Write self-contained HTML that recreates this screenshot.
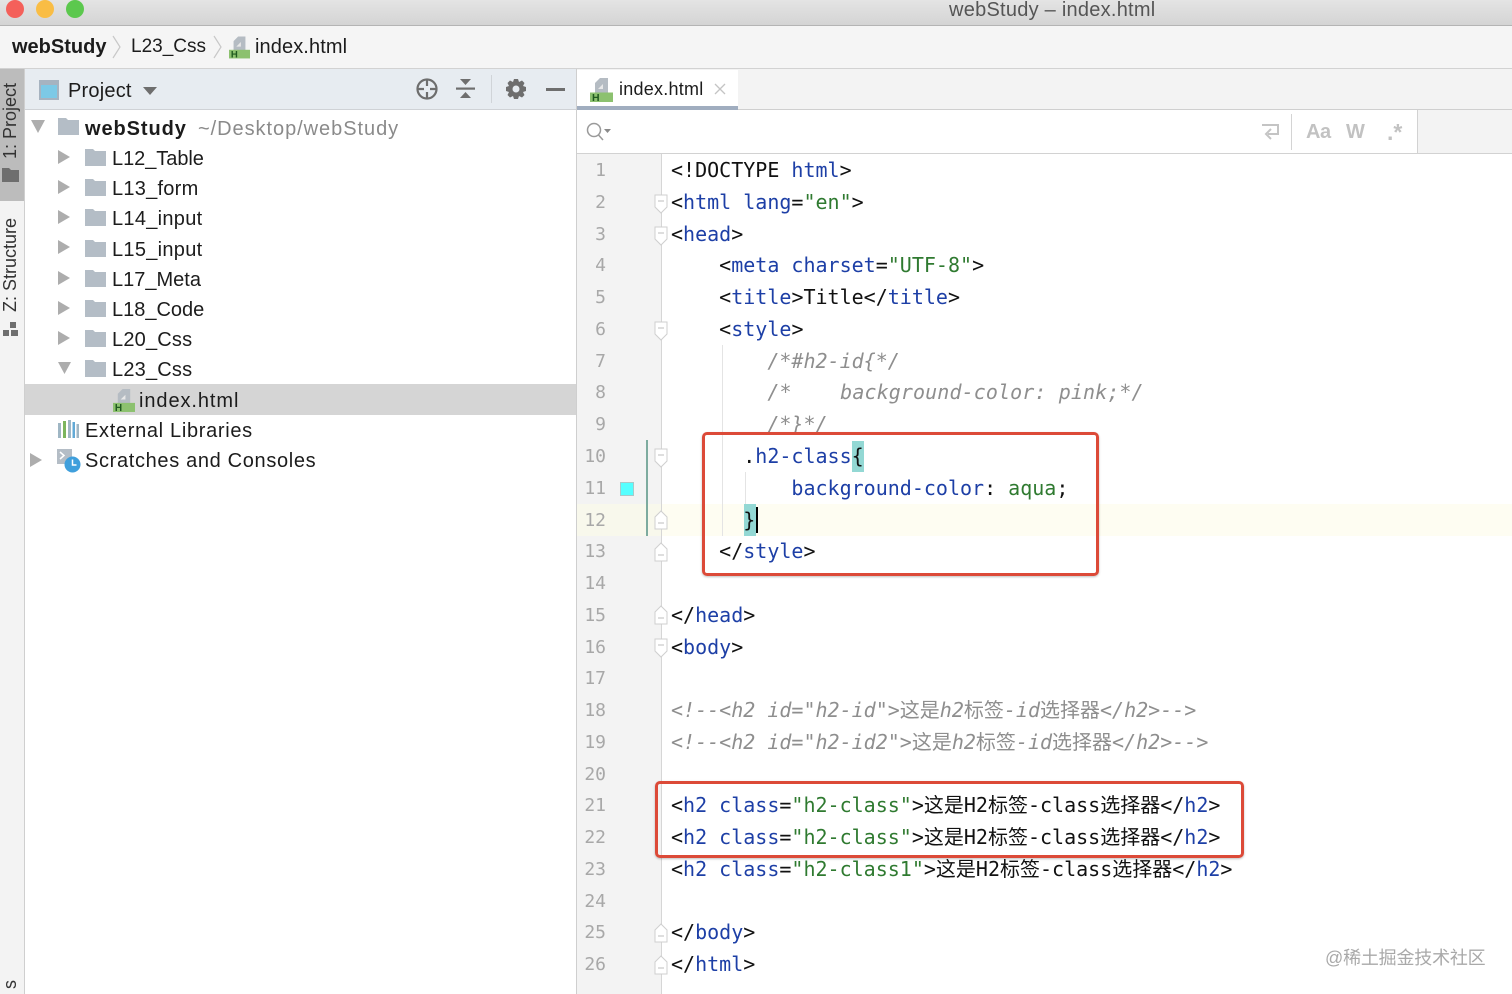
<!DOCTYPE html>
<html lang="zh"><head><meta charset="utf-8"><title>webStudy – index.html</title>
<style>
*{box-sizing:border-box}
html,body{margin:0;padding:0;width:1512px;height:994px;overflow:hidden;background:#fff}
body{position:relative;font-family:"Liberation Sans","Noto Sans CJK SC",sans-serif;color:#1c1c1c}
.a{position:absolute}
.t{position:absolute;white-space:nowrap;font-size:20px;line-height:30px;letter-spacing:.62px}
svg{position:absolute;overflow:visible}
pre{margin:0;position:absolute;font-family:"DejaVu Sans Mono","Noto Sans CJK SC",monospace;font-size:20px;line-height:31.76px}
.b{color:#1d3fa6}.g{color:#2f7a30}.c{color:#8e8e8e;font-style:italic}
.c i{font-style:normal}
.v{position:absolute;writing-mode:vertical-rl;transform:rotate(180deg);font-size:18px;line-height:20px;white-space:nowrap;color:#333}
</style></head><body>
<svg width="0" height="0" style="position:absolute">
<defs>
<symbol id="f" viewBox="0 0 21 17"><path d="M0 0H8L10 2H21V17H0Z" fill="#b4bdc6"/></symbol>
<symbol id="h" viewBox="0 0 23 24"><path d="M10 0H18V15H5V5Z" fill="#b5bcc3"/><path d="M8 11L13 6V11Z" fill="#e8e8e8"/><rect x="0" y="14.500" width="23" height="9.500" fill="#8cc16f"/><text x="2" y="23" font-family="Liberation Sans" font-size="10.5" font-weight="bold" fill="#1f5a1f">H</text></symbol>
<symbol id="r" viewBox="0 0 12 14"><path d="M0 0L12 7L0 14Z" fill="#adadad"/></symbol>
<symbol id="fo" viewBox="0 0 14 20"><path d="M1 1H13V13L7 19L1 13Z" fill="#fff" stroke="#cfcfcf"/><path d="M4 7H10" stroke="#bdbdbd"/></symbol>
<symbol id="fc" viewBox="0 0 14 20"><path d="M1 19H13V7L7 1L1 7Z" fill="#fff" stroke="#cfcfcf"/><path d="M4 13H10" stroke="#bdbdbd"/></symbol>
</defs></svg>

<!-- title bar -->
<div class="a" style="left:0;top:0;width:1512px;height:26px;background:linear-gradient(#e4e4e4,#d4d4d4);border-bottom:1px solid #b4b4b4"></div>
<div class="a" style="left:6px;top:0;width:18px;height:18px;border-radius:50%;background:#f4605a"></div>
<div class="a" style="left:36px;top:0;width:18px;height:18px;border-radius:50%;background:#f9bd45"></div>
<div class="a" style="left:66px;top:0;width:18px;height:18px;border-radius:50%;background:#5cc84e"></div>
<div class="t" style="left:949px;top:-5px;color:#555;letter-spacing:.25px">webStudy – index.html</div>

<!-- breadcrumb -->
<div class="a" style="left:0;top:26px;width:1512px;height:43px;background:#f5f5f5;border-bottom:1px solid #d2d2d2"></div>
<div class="t" style="left:12px;top:32px;font-weight:bold;letter-spacing:0">webStudy</div>
<svg style="left:112px;top:36px" width="10" height="24"><path d="M1 0L8 11L1 22" fill="none" stroke="#c8c8c8" stroke-width="1.2"/></svg>
<div class="t" style="left:131px;top:32px;font-size:19px;letter-spacing:0">L23_Css</div>
<svg style="left:213px;top:36px" width="10" height="24"><path d="M1 0L8 11L1 22" fill="none" stroke="#c8c8c8" stroke-width="1.2"/></svg>
<svg style="left:229px;top:36px" width="21" height="23"><use href="#h" width="21" height="23"/></svg>
<div class="t" style="left:255px;top:32px;letter-spacing:.1px">index.html</div>

<!-- left strip -->
<div class="a" style="left:0;top:69px;width:25px;height:925px;background:#f3f3f3;border-right:1px solid #cfcfcf"></div>
<div class="a" style="left:0;top:69px;width:24px;height:132px;background:#bcbcbc"></div>
<div class="v" style="left:0;top:83px">1: Project</div>
<svg style="left:2px;top:168px" width="17" height="14"><path d="M0 0H7L9 2H17V14H0Z" fill="#6e6e6e"/></svg>
<div class="v" style="left:0;top:218px">Z: Structure</div>
<svg style="left:3px;top:322px" width="15" height="15" fill="#6e6e6e"><rect x="7" y="0" width="6" height="6"/><rect x="0" y="8" width="6" height="6"/><rect x="8" y="8" width="7" height="6"/></svg>
<div class="v" style="left:0;top:980px">s</div>

<!-- project header -->
<div class="a" style="left:25px;top:69px;width:551px;height:41px;background:#e7ecf1;border-bottom:1px solid #cfd2d6"></div>
<svg style="left:39px;top:80px" width="20" height="20"><rect width="20" height="20" fill="#a6b3c0"/><rect x="2" y="5" width="16" height="13" fill="#7cc9e6"/></svg>
<div class="t" style="left:68px;top:76px;letter-spacing:.2px">Project</div>
<svg style="left:143px;top:87px" width="14" height="9"><path d="M0 0H14L7 8Z" fill="#6e6e6e"/></svg>
<svg style="left:415px;top:77px" width="24" height="24" fill="none" stroke="#6e6e6e" stroke-width="2.2"><circle cx="12" cy="12" r="9.5"/><path d="M12 2V9M12 15V22M2 12H9M15 12H22"/></svg>
<svg style="left:456px;top:79px" width="20" height="20" fill="#6e6e6e"><path d="M4 0H15L9.500 6Z"/><rect x="0" y="8.500" width="19" height="2.200"/><path d="M4 19H15L9.500 13Z"/></svg>
<div class="a" style="left:491px;top:75px;width:1px;height:28px;background:#d0d4d8"></div>
<svg style="left:505px;top:78px" width="22" height="22"><path d="M9 1H13L14 4L17 2.500L19.500 5L18 8L21 9V13L18 14L19.500 17L17 19.500L14 18L13 21H9L8 18L5 19.500L2.500 17L4 14L1 13V9L4 8L2.500 5L5 2.500L8 4Z" fill="#6e6e6e"/><circle cx="11" cy="11" r="3.500" fill="#e7ecf1"/></svg>
<div class="a" style="left:546px;top:88px;width:19px;height:3px;background:#6e6e6e"></div>

<!-- tree -->
<div class="a" style="left:25px;top:384px;width:551px;height:31px;background:#d5d5d5"></div>
<svg style="left:31px;top:120px" width="14" height="13"><path d="M0 0H14L7 13Z" fill="#adadad"/></svg>
<svg style="left:58px;top:118px" width="21" height="17"><use href="#f" width="21" height="17"/></svg>
<div class="t" style="left:85px;top:114px;font-weight:bold;letter-spacing:.92px">webStudy</div>
<div class="t" style="left:198px;top:114px;color:#8a8a8a;letter-spacing:.95px">~/Desktop/webStudy</div>

<svg style="left:58px;top:150px" width="12" height="14"><use href="#r" width="12" height="14"/></svg><svg style="left:85px;top:149px" width="21" height="17"><use href="#f" width="21" height="17"/></svg><div class="t" style="left:112px;top:144px;letter-spacing:-.05px">L12_Table</div>
<svg style="left:58px;top:180px" width="12" height="14"><use href="#r" width="12" height="14"/></svg><svg style="left:85px;top:179px" width="21" height="17"><use href="#f" width="21" height="17"/></svg><div class="t" style="left:112px;top:174px;letter-spacing:.25px">L13_form</div>
<svg style="left:58px;top:210px" width="12" height="14"><use href="#r" width="12" height="14"/></svg><svg style="left:85px;top:209px" width="21" height="17"><use href="#f" width="21" height="17"/></svg><div class="t" style="left:112px;top:204px;letter-spacing:.29px">L14_input</div>
<svg style="left:58px;top:240px" width="12" height="14"><use href="#r" width="12" height="14"/></svg><svg style="left:85px;top:240px" width="21" height="17"><use href="#f" width="21" height="17"/></svg><div class="t" style="left:112px;top:235px;letter-spacing:.29px">L15_input</div>
<svg style="left:58px;top:271px" width="12" height="14"><use href="#r" width="12" height="14"/></svg><svg style="left:85px;top:270px" width="21" height="17"><use href="#f" width="21" height="17"/></svg><div class="t" style="left:112px;top:265px;letter-spacing:0">L17_Meta</div>
<svg style="left:58px;top:301px" width="12" height="14"><use href="#r" width="12" height="14"/></svg><svg style="left:85px;top:300px" width="21" height="17"><use href="#f" width="21" height="17"/></svg><div class="t" style="left:112px;top:295px;letter-spacing:0">L18_Code</div>
<svg style="left:58px;top:331px" width="12" height="14"><use href="#r" width="12" height="14"/></svg><svg style="left:85px;top:330px" width="21" height="17"><use href="#f" width="21" height="17"/></svg><div class="t" style="left:112px;top:325px;letter-spacing:.2px">L20_Css</div>
<svg style="left:58px;top:362px" width="14" height="12"><path d="M0 0H13L6.500 12Z" fill="#adadad"/></svg><svg style="left:85px;top:360px" width="21" height="17"><use href="#f" width="21" height="17"/></svg><div class="t" style="left:112px;top:355px;letter-spacing:.2px">L23_Css</div>
<svg style="left:113px;top:389px" width="22" height="23"><use href="#h" width="22" height="23"/></svg><div class="t" style="left:139px;top:386px;letter-spacing:.92px">index.html</div>
<svg style="left:57px;top:420px" width="22" height="18"><rect x="1" y="3" width="3" height="15" fill="#9fb6c4"/><rect x="6" y="1" width="3" height="17" fill="#7cb55e"/><rect x="11" y="0" width="3" height="18" fill="#9fb6c4"/><rect x="15.500" y="2" width="2.500" height="16" fill="#62a9d6"/><rect x="19.500" y="4" width="2.500" height="14" fill="#9fb6c4"/></svg>
<div class="t" style="left:85px;top:416px;letter-spacing:.68px">External Libraries</div>
<svg style="left:30px;top:453px" width="12" height="14"><use href="#r" width="12" height="14"/></svg>
<svg style="left:57px;top:449px" width="24" height="24"><rect width="15" height="15" fill="#b4bdc6"/><path d="M3 3L7 6.500L3 10" fill="none" stroke="#fff" stroke-width="1.500"/><circle cx="15.500" cy="15.500" r="8" fill="#3f9fdc"/><path d="M15.500 10.500V16H19.500" fill="none" stroke="#fff" stroke-width="1.500"/></svg>
<div class="t" style="left:85px;top:446px;letter-spacing:.66px">Scratches and Consoles</div>

<div class="a" style="left:576px;top:69px;width:1px;height:925px;background:#cfcfcf"></div>

<!-- tabs -->
<div class="a" style="left:577px;top:69px;width:935px;height:41px;background:#f3f3f3;border-bottom:1px solid #cfcfcf"></div>
<div class="a" style="left:577px;top:70px;width:161px;height:36px;background:#fff"></div>
<div class="a" style="left:577px;top:106px;width:161px;height:4px;background:#a0adbf"></div>
<svg style="left:590px;top:78px" width="23" height="24"><use href="#h" width="23" height="24"/></svg>
<div class="t" style="left:619px;top:74px;font-size:18px;letter-spacing:.25px">index.html</div>
<svg style="left:714px;top:83px" width="12" height="12"><path d="M1 1L11 11M11 1L1 11" stroke="#c4c4c4" stroke-width="1.300"/></svg>

<!-- search bar -->
<div class="a" style="left:577px;top:110px;width:935px;height:44px;background:#f3f3f3;border-bottom:1px solid #d2d2d2"></div>
<div class="a" style="left:577px;top:110px;width:841px;height:43px;background:#fff;border-right:1px solid #d2d2d2"></div>
<svg style="left:586px;top:122px" width="26" height="20" fill="none" stroke="#9a9a9a" stroke-width="1.500"><circle cx="8" cy="8" r="6.500"/><path d="M12.500 13L17 18"/><path d="M18 7H25L21.500 11Z" fill="#8a8a8a" stroke="none"/></svg>
<svg style="left:1261px;top:123px" width="20" height="19" fill="none" stroke="#c4c4c4" stroke-width="2"><path d="M1 2H17V11H7"/><path d="M10 6L5 11L10 16" /></svg>
<div class="a" style="left:1291px;top:114px;width:1px;height:36px;background:#d4d4d4"></div>
<div class="t" style="left:1306px;top:117px;color:#c2c2c2;font-weight:bold;letter-spacing:-.4px">Aa</div>
<div class="t" style="left:1346px;top:117px;color:#c2c2c2;font-weight:bold;letter-spacing:0">W</div>
<div class="t" style="left:1387px;top:117px;color:#c2c2c2;font-weight:bold;letter-spacing:0;font-size:23px">.*</div>

<!-- gutter -->
<div class="a" style="left:577px;top:154px;width:84px;height:840px;background:#f3f3f3"></div>
<div class="a" style="left:661px;top:154px;width:1px;height:840px;background:#d6d6d6"></div>
<div class="a" style="left:577px;top:504px;width:84px;height:32px;background:#f8f8ec"></div>
<div class="a" style="left:662px;top:504px;width:850px;height:32px;background:#fefdf2"></div>
<div class="a" style="left:646px;top:440px;width:2px;height:96px;background:#7dab9f"></div>
<div class="a" style="left:620px;top:482px;width:14px;height:14px;background:#5ff;border:1px solid #a9c9c9"></div>
<pre style="left:577px;top:155.100px;width:29px;text-align:right;font-size:18px;color:#a8a8a8">1
2
3
4
5
6
7
8
9
10
11
12
13
14
15
16
17
18
19
20
21
22
23
24
25
26</pre>

<svg style="left:654px;top:194px" width="14" height="20"><use href="#fo" width="14" height="20"/></svg>
<svg style="left:654px;top:226px" width="14" height="20"><use href="#fo" width="14" height="20"/></svg>
<svg style="left:654px;top:321px" width="14" height="20"><use href="#fo" width="14" height="20"/></svg>
<svg style="left:654px;top:448px" width="14" height="20"><use href="#fo" width="14" height="20"/></svg>
<svg style="left:654px;top:510px" width="14" height="20"><use href="#fc" width="14" height="20"/></svg>
<svg style="left:654px;top:542px" width="14" height="20"><use href="#fc" width="14" height="20"/></svg>
<svg style="left:654px;top:605px" width="14" height="20"><use href="#fc" width="14" height="20"/></svg>
<svg style="left:654px;top:638px" width="14" height="20"><use href="#fo" width="14" height="20"/></svg>
<svg style="left:654px;top:923px" width="14" height="20"><use href="#fc" width="14" height="20"/></svg>
<svg style="left:654px;top:955px" width="14" height="20"><use href="#fc" width="14" height="20"/></svg>

<!-- editor decorations -->
<div class="a" style="left:722px;top:345px;width:1px;height:191px;background:#e4e4e4"></div>
<div class="a" style="left:745px;top:472px;width:1px;height:32px;background:#e4e4e4"></div>
<div class="a" style="left:852px;top:441px;width:12px;height:31px;background:#93d8d4"></div>
<div class="a" style="left:744px;top:504px;width:12px;height:32px;background:#93d8d4"></div>

<pre style="left:671px;top:155.100px;color:#111">&lt;!DOCTYPE <span class="b">html</span>&gt;
&lt;<span class="b">html lang</span>=<span class="g">"en"</span>&gt;
&lt;<span class="b">head</span>&gt;
    &lt;<span class="b">meta charset</span>=<span class="g">"UTF-8"</span>&gt;
    &lt;<span class="b">title</span>&gt;Title&lt;/<span class="b">title</span>&gt;
    &lt;<span class="b">style</span>&gt;
        <span class="c">/*#h2-id{*/</span>
        <span class="c" style="letter-spacing:.1px">/*    background-color: pink;*/</span>
        <span class="c">/*}*/</span>
      .<span class="b">h2-class</span>{
          <span class="b">background-color</span>: <span class="g">aqua</span>;
      }
    &lt;/<span class="b">style</span>&gt;

&lt;/<span class="b">head</span>&gt;
&lt;<span class="b">body</span>&gt;

<span class="c">&lt;!--&lt;h2 id="h2-id"&gt;<i>这是</i>h2<i>标签</i>-id<i>选择器</i>&lt;/h2&gt;--&gt;</span>
<span class="c">&lt;!--&lt;h2 id="h2-id2"&gt;<i>这是</i>h2<i>标签</i>-id<i>选择器</i>&lt;/h2&gt;--&gt;</span>

&lt;<span class="b">h2 class</span>=<span class="g">"h2-class"</span>&gt;这是H2标签-class选择器&lt;/<span class="b">h2</span>&gt;
&lt;<span class="b">h2 class</span>=<span class="g">"h2-class"</span>&gt;这是H2标签-class选择器&lt;/<span class="b">h2</span>&gt;
&lt;<span class="b">h2 class</span>=<span class="g">"h2-class1"</span>&gt;这是H2标签-class选择器&lt;/<span class="b">h2</span>&gt;

&lt;/<span class="b">body</span>&gt;
&lt;/<span class="b">html</span>&gt;</pre>

<div class="a" style="left:756px;top:507px;width:2px;height:26px;background:#000"></div>
<div class="a" style="left:702px;top:432px;width:397px;height:144px;border:3px solid #dc4a38;border-radius:5px;box-shadow:0 1px 2px rgba(0,0,0,.25)"></div>
<div class="a" style="left:655px;top:781px;width:589px;height:77px;border:3px solid #dc4a38;border-radius:5px;box-shadow:0 1px 2px rgba(0,0,0,.25)"></div>
<div class="t" style="left:1325px;top:943px;font-size:18px;color:#a9a9a9;letter-spacing:-.2px">@稀土掘金技术社区</div>
</body></html>
